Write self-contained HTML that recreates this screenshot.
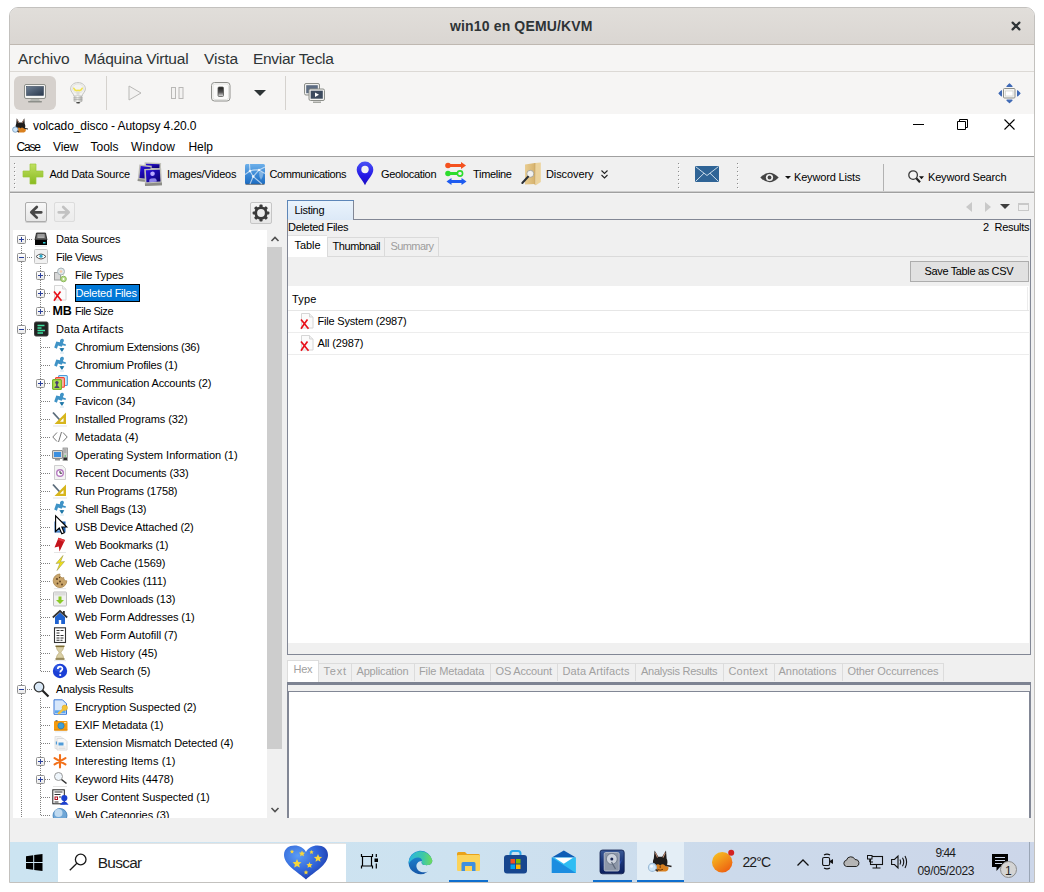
<!DOCTYPE html>
<html lang="es"><head><meta charset="utf-8"><title>win10 en QEMU/KVM</title>
<style>
html,body{margin:0;padding:0;}
body{width:1044px;height:892px;overflow:hidden;background:#fff;position:relative;font-family:"Liberation Sans",sans-serif;}
.a{position:absolute;}
.t{position:absolute;white-space:nowrap;line-height:1;}
svg{position:absolute;overflow:visible;}
/* GTK outer window */
#gwin{left:9px;top:7px;width:1024px;height:874px;border:1px solid #c3c1be;border-radius:9px 9px 0 0;background:#f6f5f4;overflow:hidden;}
#gtitle{left:0;top:0;width:1024px;height:36px;background:linear-gradient(#e1deda,#dad6d2);border-bottom:1px solid #bfb8b1;}
#gtitle .t{font-weight:bold;color:#2e3436;}
#gmenu{left:0;top:37px;width:1024px;height:26px;background:#f6f5f4;border-bottom:1px solid #dcd9d5;}
#gmenu .t{font-size:15.5px;color:#2e3436;top:6px;}
#gtool{left:0;top:64px;width:1024px;height:42px;background:#f6f5f4;}
/* Windows guest */
#vm{left:10px;top:114px;width:1024px;height:768px;background:#f0f0f0;overflow:hidden;}
.seg{font-size:12px;color:#000;}
.tah{font-size:11px;color:#000;}
.grip{width:2px;background:repeating-linear-gradient(#8c8c8c 0 1px,transparent 1px 4px) left top/1px 100% no-repeat,repeating-linear-gradient(transparent 0 1px,#fff 1px 2px,transparent 2px 4px) right top/1px 100% no-repeat;}
.dv{width:1px;background:repeating-linear-gradient(#808080 0 1px,transparent 1px 2px);}
.dh{height:1px;background:repeating-linear-gradient(90deg,#808080 0 1px,transparent 1px 2px);}

</style></head>
<body>
<div id="gwin" class="a">
 <div id="gtitle" class="a"><div class="t" style="left:440px;top:11px;font-size:14px;letter-spacing:0.15px;font-weight:bold;color:#2e3436">win10 en QEMU/KVM</div>
  <svg style="left:1000px;top:12px" width="12" height="12" viewBox="0 0 12 12"><path d="M2.600 2.600 L9.400 9.400 M9.400 2.600 L2.600 9.400" stroke="#2e3436" stroke-width="2.200" stroke-linecap="round" fill="none"/></svg>
 </div>
 <div id="gmenu" class="a">
  <div class="t" style="left:8px">Archivo</div>
  <div class="t" style="left:74px;letter-spacing:-.2px">Máquina Virtual</div>
  <div class="t" style="left:194px">Vista</div>
  <div class="t" style="left:243px;letter-spacing:-.3px">Enviar Tecla</div>
 </div>
 <div id="gtool" class="a">
  <!-- coordinates relative to gtool: page x-10, page y-72 -->
  <div class="a" style="left:4px;top:4px;width:42px;height:34px;border-radius:6px;background:#d6d1cd"></div>
  <!-- monitor -->
  <svg style="left:14px;top:12px" width="22" height="19" viewBox="0 0 22 19">
   <defs><linearGradient id="mon" x1="0" y1="0" x2="1" y2="1"><stop offset="0" stop-color="#6c7d92"/><stop offset="1" stop-color="#2a394d"/></linearGradient></defs>
   <rect x="0.5" y="0.5" width="21" height="14" rx="1.5" fill="#f4f4f2" stroke="#8d8f8a"/>
   <rect x="2.5" y="2.5" width="17" height="9" fill="url(#mon)" stroke="#3b4a5e" stroke-width=".6"/>
   <path d="M7 15 h8 l1 2 h-10z" fill="#b5b7b2"/><rect x="4" y="17" width="14" height="1.4" rx=".7" fill="#8d8f8a"/>
  </svg>
  <!-- bulb -->
  <svg style="left:59.500px;top:9.500px" width="16" height="22" viewBox="0 0 16 22">
   <defs><linearGradient id="bb" x1="0" y1="0" x2="1" y2="0"><stop offset="0" stop-color="#b9b9b6"/><stop offset=".45" stop-color="#f4f4f2"/><stop offset="1" stop-color="#a9a9a6"/></linearGradient></defs>
   <path d="M8 .6 C12.500 .6 15.400 3.400 15.400 6.900 C15.400 10 12.300 11.500 12.100 14 H3.900 C3.700 11.500 .6 10 .6 6.900 C.6 3.400 3.500 .6 8 .6z" fill="#f3f3f1" stroke="#c3c3c0" stroke-width="1"/>
   <ellipse cx="8" cy="6.500" rx="5.600" ry="4.600" fill="none" stroke="#dededb" stroke-width=".8"/>
   <path d="M3.800 6.300 Q5 9.300 8 8.300 Q11 9.300 12.200 6.300" fill="none" stroke="#f1e24e" stroke-width="1.700" stroke-linecap="round"/>
   <path d="M7.200 9.500 V13.800 M8.800 9.500 V13.800" stroke="#cfcfcc" stroke-width=".8"/>
   <rect x="3.600" y="14" width="8.800" height="6" rx="1.200" fill="url(#bb)"/>
   <path d="M3.800 15.800 h8.400 M3.800 17.600 h8.400" stroke="#a4a4a1" stroke-width=".7"/>
   <ellipse cx="8.200" cy="20.800" rx="2.200" ry=".8" fill="#3c3c3a"/>
  </svg>
  <div class="a" style="left:96px;top:4px;width:1px;height:34px;background:#d5d2ce"></div>
  <!-- play -->
  <svg style="left:118px;top:13px" width="14" height="16" viewBox="0 0 14 16"><path d="M1 1 L13 8 L1 15z" fill="#f3f2f1" stroke="#b9b8b6" stroke-width="1"/></svg>
  <!-- pause -->
  <svg style="left:161px;top:15px" width="14" height="12" viewBox="0 0 14 12"><rect x=".5" y=".5" width="4" height="11" fill="#f3f2f1" stroke="#b9b8b6"/><rect x="8" y=".5" width="4" height="11" fill="#f3f2f1" stroke="#b9b8b6"/></svg>
  <!-- shutdown -->
  <svg style="left:201px;top:10px" width="20" height="20" viewBox="0 0 20 20">
   <defs><linearGradient id="sw" x1="0" y1="0" x2="0" y2="1"><stop offset="0" stop-color="#1c1c1c"/><stop offset=".55" stop-color="#555"/><stop offset="1" stop-color="#e8e8e8"/></linearGradient></defs>
   <rect x=".5" y=".5" width="18.500" height="18.500" rx="3" fill="#fbfbfa" stroke="#8f908c"/>
   <rect x="2" y="2" width="15.500" height="15.500" rx="2" fill="none" stroke="#e3e3e0"/>
   <rect x="7" y="5" width="5.500" height="9.500" rx="1" fill="url(#sw)" stroke="#555753" stroke-width=".8"/>
  </svg>
  <svg style="left:244px;top:18px" width="12" height="6" viewBox="0 0 12 6"><path d="M0 0 h12 l-6 6z" fill="#2e3436"/></svg>
  <div class="a" style="left:275px;top:4px;width:1px;height:34px;background:#d5d2ce"></div>
  <!-- screens -->
  <svg style="left:294px;top:11px" width="21" height="21" viewBox="0 0 21 21">
   <rect x=".5" y=".5" width="15" height="11.500" rx="1.500" fill="#f1f1ef" stroke="#8d8f8a"/>
   <rect x="2.200" y="2.200" width="11.600" height="8" fill="#5d6c82"/>
   <rect x="5" y="6" width="15.500" height="11.500" rx="1.500" fill="#f1f1ef" stroke="#8d8f8a"/>
   <rect x="6.700" y="7.700" width="12.100" height="8" fill="#3c4a5e"/>
   <path d="M11 9.500 l4 2.200 l-4 2.200z" fill="#fff"/>
   <rect x="9" y="18.500" width="8" height="1.500" fill="#a5a7a2"/>
  </svg>
  <!-- fullscreen -->
  <svg style="left:988px;top:11px" width="23" height="21" viewBox="0 0 23 21">
   <g fill="#3f69b5" stroke="#3f69b5" stroke-width="1.200" stroke-linejoin="round"><path d="M11.500 1 L14 3.400 H9z"/><path d="M11.500 19.600 L14 17.200 H9z"/><path d="M1 10.300 L3.400 7.800 V12.800z"/><path d="M22 10.300 L19.600 7.800 V12.800z"/></g>
   <rect x="5.500" y="5.500" width="11.500" height="9.500" rx="1" fill="#f4f4f2" stroke="#8d8f8a"/>
   <rect x="7.500" y="8" width="7.500" height="5" fill="#fff" stroke="#cfd0cc" stroke-width=".7"/>
  </svg>
 </div>
</div>

<div id="vm" class="a">
 <!-- all coords inside vm: page x-10, page y-114 -->
 <div class="a" style="left:0;top:0;width:1024px;height:42px;background:#fff"></div>
 <!-- autopsy dog icon -->
 <svg style="left:1px;top:4px" width="18.700" height="16" viewBox="0 0 28 24">
  <path d="M8.600 .4 L12.300 6.800 H16.200 L20 .4 L20.600 8.500 C21.800 10.500 21.800 14 20.400 16 L14.200 18.500 L8 16 C6.600 14 6.600 10.500 7.800 8.500z" fill="#1f1c1b"/>
  <path d="M9.400 2.600 L11.500 7.600 M19.200 2.600 L17 7.600" stroke="#c9937a" stroke-width="1.100"/>
  <path d="M9.500 15.500 Q11.500 13.200 14.200 14.800 Q17 13.200 19 15.500 L22.400 17 Q23 20.500 19.500 21.600 H10.500 Q8.500 20.500 9 17.500z" fill="#d9801f"/>
  <path d="M12.300 13.300 H16.100 L14.200 15.600z" fill="#1f1c1b"/>
  <path d="M19.500 15.200 L25.500 16.600" stroke="#2a2422" stroke-width="1.500"/>
  <circle cx="6.400" cy="17.400" r="4" fill="#cfe7fa" stroke="#7fa3c6" stroke-width="1.400"/>
  <path d="M9.600 19.600 L12 21" stroke="#3a3431" stroke-width="1.600"/>
 </svg>
 <div class="t" style="left:23px;top:6px;font-size:12px;letter-spacing:-0.09px;">volcado_disco - Autopsy 4.20.0</div>
 <svg style="left:903px;top:10px" width="11" height="1" viewBox="0 0 11 1"><rect width="11" height="1" fill="#000"/></svg>
 <svg style="left:947px;top:5px" width="11" height="11" viewBox="0 0 11 11"><path d="M.5 2.500 h8 v8 h-8z M2.500 2.500 v-2 h8 v8 h-2" fill="none" stroke="#000" stroke-width="1"/></svg>
 <svg style="left:994px;top:5px" width="11" height="11" viewBox="0 0 11 11"><path d="M.5 .5 L10.500 10.500 M10.500 .5 L.5 10.500" stroke="#000" stroke-width="1.100"/></svg>
 <div class="t" style="left:6.5px;top:27px;font-size:12px;letter-spacing:-1.17px;">Case</div>
 <div class="t" style="left:43px;top:27px;font-size:12px;letter-spacing:-0.1px;">View</div>
 <div class="t" style="left:80.5px;top:27px;font-size:12px;">Tools</div>
 <div class="t" style="left:121px;top:27px;font-size:12px;letter-spacing:0.26px;">Window</div>
 <div class="t" style="left:178.5px;top:27px;font-size:12px;letter-spacing:-0.06px;">Help</div>
 <!-- toolbar -->
 <div class="a" style="left:0;top:42px;width:1024px;height:1px;background:#a0a0a0"></div>
 <div class="a" style="left:0;top:43px;width:1024px;height:34px;background:#f0f0f0"></div>
 <div class="a" style="left:0;top:77px;width:1024px;height:1px;background:#cdcdcd"></div>
 <div class="a" style="left:0;top:78px;width:1024px;height:1px;background:#a0a0a0"></div><div class="a" style="left:0;top:79px;width:1024px;height:1px;background:#f5f5f5"></div>
 <div class="a grip" style="left:4px;top:49px;height:26px"></div>
 <div class="a grip" style="left:668px;top:49px;height:26px"></div>
 <div class="a grip" style="left:727px;top:49px;height:26px"></div>
 <div class="a" style="left:873px;top:50px;width:1px;height:27px;background:#b2b2b2"></div>
 <!-- plus -->
 <svg style="left:13px;top:50px" width="20" height="20" viewBox="0 0 20 20">
  <defs><linearGradient id="pl" x1="0" y1="0" x2="0" y2="1"><stop offset="0" stop-color="#c0e060"/><stop offset="1" stop-color="#88ba20"/></linearGradient></defs>
  <path d="M7 0 h6 v7 h7 v6 h-7 v7 h-6 v-7 h-7 v-6 h7z" fill="url(#pl)" stroke="#9cc73a" stroke-width=".7"/>
 </svg>
 <div class="t" style="left:39.5px;top:55px;font-size:11px;letter-spacing:-0.23px;">Add Data Source</div>
 <!-- images/videos -->
 <svg style="left:127px;top:47px" width="26" height="26" viewBox="0 0 26 26">
  <defs><linearGradient id="ph" x1="0" y1="0" x2="1" y2="1"><stop offset="0" stop-color="#2a10e0"/><stop offset="1" stop-color="#0a0068"/></linearGradient></defs>
  <g transform="rotate(2 16 5)"><rect x="7.500" y="1.600" width="16.500" height="7" fill="#c2c2ba"/><rect x="9" y="3" width="13.500" height="4" fill="url(#ph)"/></g>
  <g transform="rotate(6 7 12)"><rect x="1.500" y="4" width="12.500" height="16.500" fill="#bdbdb6"/><rect x="1.500" y="18.500" width="12.500" height="2" fill="#8f8f8a"/><rect x="3" y="5.500" width="10" height="12" fill="url(#ph)"/></g>
  <g transform="rotate(-3 16 16)"><rect x="7.600" y="7.600" width="17" height="17" fill="#bfbfb8"/><rect x="7.600" y="22" width="17" height="2.600" fill="#8c8c87"/><rect x="9.200" y="9" width="14" height="12" fill="url(#ph)"/>
  <circle cx="15.700" cy="12.700" r="2.300" fill="#b9a9ff"/><path d="M12 21 v-1.500 q0 -2 2 -2.200 h3.400 q2 .2 2 2.200 v1.500z" fill="#8f85e8"/></g>
 </svg>
 <div class="t" style="left:157px;top:55px;font-size:11px;letter-spacing:-0.26px;">Images/Videos</div>
 <!-- communications -->
 <svg style="left:234px;top:50px" width="21" height="21" viewBox="0 0 21 21">
  <defs><linearGradient id="cm" x1="0" y1="0" x2="0" y2="1"><stop offset="0" stop-color="#6db0ea"/><stop offset=".5" stop-color="#3d8ad6"/><stop offset="1" stop-color="#1c6cc2"/></linearGradient></defs>
  <rect x="1" y="0" width="20" height="20.300" rx="1.500" fill="url(#cm)"/><rect x="1.500" y="19.800" width="19" height="1" fill="#4a4a4a" opacity=".7"/>
  <path d="M15 8 q2.500 -1.500 4.500 1 q-.5 4 -2.500 7 q-2 -3 -2 -8z" fill="#9cc4ea" opacity=".7"/>
  <path d="M6 7 L5.500 0 M6 7 L1 10.500 M6 7 Q10 5.500 15 6 M15 6 L21 3 M15 6 L21 9.500 M6 7 L9.200 12.500 M15 6 L9.200 12.500 M9.200 12.500 L6 20 M9.200 12.500 L18 20" stroke="#fff" stroke-opacity=".62" stroke-width="1.100" fill="none"/>
  <g fill="#fff" opacity=".8"><circle cx="6" cy="7" r="1.300"/><circle cx="15" cy="6" r="1.300"/><circle cx="9.200" cy="12.500" r="1.300"/></g>
 </svg>
 <div class="t" style="left:259.5px;top:55px;font-size:11px;letter-spacing:-0.38px;">Communications</div>
 <!-- geolocation -->
 <svg style="left:346px;top:47px" width="18" height="25" viewBox="0 0 18 25">
  <defs><linearGradient id="pin" x1="0" y1="0" x2="0" y2="1"><stop offset="0" stop-color="#4a52f5"/><stop offset=".6" stop-color="#2418e6"/><stop offset="1" stop-color="#1a0cc0"/></linearGradient></defs>
  <path d="M9 .5 a8.300 8.300 0 0 1 8.300 8.300 c0 5 -5.500 9.500 -8.300 15.500 c-2.800 -6 -8.300 -10.500 -8.300 -15.500 a8.300 8.300 0 0 1 8.300 -8.300z" fill="url(#pin)"/>
  <circle cx="9" cy="8.500" r="3.700" fill="#f4f4f4"/>
 </svg>
 <div class="t" style="left:371px;top:55px;font-size:11px;letter-spacing:-0.32px;">Geolocation</div>
 <!-- timeline -->
 <svg style="left:435px;top:48px" width="23" height="23" viewBox="0 0 23 23">
  <g stroke-width="3" stroke-linecap="round" fill="none"><path d="M2.500 3.500 H17" stroke="#f4511e"/><path d="M2.500 11.500 H14" stroke="#2ddc2d"/><path d="M5 19.500 H17" stroke="#1e5bf0"/></g>
  <circle cx="3" cy="3.500" r="2.800" fill="#f4511e"/><path d="M16 0 l5 3.500 l-5 3.500z" fill="#f4511e"/>
  <circle cx="3" cy="11.500" r="2.800" fill="#2ddc2d"/><circle cx="15" cy="11.500" r="2.600" fill="#f0f0f0" stroke="#2ddc2d" stroke-width="1.600"/>
  <path d="M6.500 16 l-5 3.500 l5 3.500z" fill="#1e5bf0"/><path d="M16.500 16 l5 3.500 l-5 3.500z" fill="#1e5bf0"/>
 </svg>
 <div class="t" style="left:463px;top:55px;font-size:11px;letter-spacing:-0.31px;">Timeline</div>
 <!-- discovery -->
 <svg style="left:510px;top:47px" width="22" height="25" viewBox="0 0 22 25">
  <defs><linearGradient id="fd" x1="0" y1="0" x2="1" y2="0"><stop offset="0" stop-color="#e9cd92"/><stop offset="1" stop-color="#d6b26c"/></linearGradient></defs>
  <path d="M5 3.500 L15 2 V23 L5 23.500z" fill="url(#fd)"/>
  <path d="M15 2 L20.800 1.500 V21 L15.500 24.500z" fill="#ecd39c"/><path d="M15 2 V24" stroke="#c9a45e" stroke-width=".7"/>
  <circle cx="10.300" cy="12.800" r="3.500" fill="#f1f1ef" stroke="#9b9b95" stroke-width=".8"/>
  <path d="M8 15.800 L2.300 22" stroke="#2b2f36" stroke-width="2" stroke-linecap="round"/>
 </svg>
 <div class="t" style="left:536px;top:55px;font-size:11px;letter-spacing:-0.1px;">Discovery</div>
 <svg style="left:591px;top:56px" width="7" height="9" viewBox="0 0 7 9"><path d="M.5 .5 L3.500 3.500 L6.500 .5 M.5 5 L3.500 8 L6.500 5" stroke="#222" stroke-width="1.100" fill="none"/></svg>
 <!-- mail -->
 <svg style="left:685px;top:52px" width="24" height="16" viewBox="0 0 24 16"><rect width="24" height="16" rx="1" fill="#2f6496"/><path d="M.8 .8 L12 9.500 L23.200 .8 M.8 15.200 L9 7.200 M23.200 15.200 L15 7.200" stroke="#d9e6f2" stroke-width=".9" fill="none"/></svg>
 <!-- eye -->
 <svg style="left:750px;top:58px" width="19" height="11" viewBox="0 0 19 11"><path d="M.3 5.500 Q9.500 -4 18.700 5.500 Q9.500 15 .3 5.500z" fill="#444"/><circle cx="9.500" cy="5.500" r="3.600" fill="#f0f0f0"/><circle cx="9.500" cy="5.500" r="1.900" fill="#444"/></svg>
 <svg style="left:774.500px;top:62px" width="6" height="3" viewBox="0 0 6 3"><path d="M0 0 h6 l-3 3z" fill="#111"/></svg>
 <div class="t" style="left:784px;top:58px;font-size:11px;letter-spacing:-0.17px;">Keyword Lists</div>
 <!-- search -->
 <svg style="left:898px;top:56px" width="17" height="14" viewBox="0 0 17 14"><circle cx="5.100" cy="5.100" r="4.300" fill="#f4f4f4" stroke="#3a3a3a" stroke-width="1.300"/><path d="M8.300 8.300 L12 12.300" stroke="#222" stroke-width="2.200"/><path d="M11 6.200 h5 l-2.500 3z" fill="#111"/></svg>
 <div class="t" style="left:918px;top:58px;font-size:11px;letter-spacing:-0.17px;">Keyword Search</div>
</div>

<!-- left tree panel (page coordinates) -->
<div class="a" style="left:0;top:0;width:0;height:0">
<div class="a" style="left:25px;top:202px;width:20px;height:18px;border:1px solid #acacac;border-radius:2px;background:linear-gradient(#f8f8f8,#e6e6e6);box-shadow:0 1px 0 #cfcfcf"></div>
<svg style="left:29px;top:205px" width="14" height="15" viewBox="0 0 14 15"><path d="M12.300 7.300 H3 M7.800 2 L2.300 7.300 L7.800 12.600" stroke="#484848" stroke-width="2.700" stroke-linecap="round" stroke-linejoin="round" fill="none"/></svg>
<div class="a" style="left:54px;top:202px;width:19px;height:18px;border:1px solid #dcdcdc;border-radius:2px;background:linear-gradient(#f3f3f3,#ececec)"></div>
<svg style="left:57px;top:205px" width="14" height="15" viewBox="0 0 14 15"><path d="M1.700 7.300 H11 M6.200 2 L11.700 7.300 L6.200 12.600" stroke="#c2c2c2" stroke-width="2.700" stroke-linecap="round" stroke-linejoin="round" fill="none"/></svg>
<div class="a" style="left:250px;top:202px;width:20px;height:20px;border:1px solid #c6c6c6;border-radius:2px;background:linear-gradient(#f6f6f6,#e6e6e6)"></div>
<svg style="left:252px;top:204px" width="18" height="18" viewBox="0 0 18 18"><g fill="#3a3a3a"><circle cx="9" cy="9" r="6.600"/><rect x="7.400" y=".6" width="3.200" height="4" rx="1" transform="rotate(0 9 9)"/><rect x="7.400" y=".6" width="3.200" height="4" rx="1" transform="rotate(45 9 9)"/><rect x="7.400" y=".6" width="3.200" height="4" rx="1" transform="rotate(90 9 9)"/><rect x="7.400" y=".6" width="3.200" height="4" rx="1" transform="rotate(135 9 9)"/><rect x="7.400" y=".6" width="3.200" height="4" rx="1" transform="rotate(180 9 9)"/><rect x="7.400" y=".6" width="3.200" height="4" rx="1" transform="rotate(225 9 9)"/><rect x="7.400" y=".6" width="3.200" height="4" rx="1" transform="rotate(270 9 9)"/><rect x="7.400" y=".6" width="3.200" height="4" rx="1" transform="rotate(315 9 9)"/></g><circle cx="9" cy="9" r="3.900" fill="#ebebeb"/></svg>
<div class="a" style="left:13px;top:230px;width:254px;height:588px;background:#fff;overflow:hidden">
<div class="a dv" style="left:8px;top:16px;height:584px"></div>
<div class="a dv" style="left:27px;top:36px;height:45px"></div>
<div class="a dv" style="left:27px;top:108px;height:333px"></div>
<div class="a dv" style="left:27px;top:468px;height:117px"></div>
<div class="a dh" style="left:14px;top:9px;width:5px"></div>
<div class="a" style="left:4px;top:5px;width:7px;height:7px;border:1px solid #919191;border-radius:1.500px;background:linear-gradient(#fff,#e9e9e9)"></div>
<div class="a" style="left:6px;top:9px;width:5px;height:1px;background:#2a3f9a"></div>
<div class="a" style="left:8px;top:7px;width:1px;height:5px;background:#2a3f9a"></div>
<svg style="left:20px;top:1px" width="16" height="16" viewBox="0 0 16 16"><g transform="translate(0,2)"><path d="M3.500 0 h9 l1.500 7 h-12z" fill="#5c5c5c" stroke="#1a1a1a" stroke-width=".8"/><rect x="4.500" y="1.300" width="7" height="3.700" fill="#b8b8b8"/><path d="M5 2.500 h6 M5 3.800 h6" stroke="#8a8a8a" stroke-width=".6"/><rect x="2" y="7" width="12" height="5" fill="#050505"/><rect x="10" y="9" width="2.500" height="1.500" fill="#2fd0d8"/><path d="M2 13.200 h12" stroke="#e3e3e3" stroke-width="1"/></g></svg>
<div class="t" style="left:43px;top:4px;font-size:11px;letter-spacing:-0.2px;color:#000">Data Sources</div>
<div class="a dh" style="left:14px;top:27px;width:5px"></div>
<div class="a" style="left:4px;top:23px;width:7px;height:7px;border:1px solid #919191;border-radius:1.500px;background:linear-gradient(#fff,#e9e9e9)"></div>
<div class="a" style="left:6px;top:27px;width:5px;height:1px;background:#2a3f9a"></div>
<svg style="left:20px;top:19px" width="16" height="16" viewBox="0 0 16 16"><rect x="1.500" y="0.500" width="13" height="14" rx="1" fill="#f1f1f1" stroke="#c4c4c4"/><path d="M3 7.500 Q8 2.500 13 7.500 Q8 12.500 3 7.500z" fill="#fff" stroke="#555" stroke-width="1"/><circle cx="8" cy="7.200" r="1.600" fill="#2aa7c9"/></svg>
<div class="t" style="left:43px;top:22px;font-size:11px;letter-spacing:-0.38px;color:#000">File Views</div>
<div class="a dh" style="left:32px;top:45px;width:5px"></div>
<div class="a" style="left:23px;top:41px;width:7px;height:7px;border:1px solid #919191;border-radius:1.500px;background:linear-gradient(#fff,#e9e9e9)"></div>
<div class="a" style="left:25px;top:45px;width:5px;height:1px;background:#2a3f9a"></div>
<div class="a" style="left:27px;top:43px;width:1px;height:5px;background:#2a3f9a"></div>
<svg style="left:39px;top:37px" width="16" height="16" viewBox="0 0 16 16"><rect x="2.500" y="5.500" width="6" height="7.500" fill="#d8d8d8" stroke="#9a9a9a"/><circle cx="9" cy="4.500" r="3.500" fill="#dfe7ea" stroke="#a9b4b8"/><circle cx="9" cy="4.500" r="1.300" fill="#f7c9a8"/><circle cx="11.500" cy="12" r="2.800" fill="#b9dc8a" stroke="#8ab85a"/><circle cx="11.500" cy="12" r=".9" fill="#fff"/></svg>
<div class="t" style="left:62px;top:40px;font-size:11px;letter-spacing:-0.16px;color:#000">File Types</div>
<div class="a dh" style="left:32px;top:63px;width:5px"></div>
<div class="a" style="left:23px;top:59px;width:7px;height:7px;border:1px solid #919191;border-radius:1.500px;background:linear-gradient(#fff,#e9e9e9)"></div>
<div class="a" style="left:25px;top:63px;width:5px;height:1px;background:#2a3f9a"></div>
<div class="a" style="left:27px;top:61px;width:1px;height:5px;background:#2a3f9a"></div>
<svg style="left:39px;top:55px" width="16" height="16" viewBox="0 0 16 16"><path d="M2.500 .5 h8 l3.500 3.500 v11 h-11.500z" fill="#fbfbfb" stroke="#d6d6d6"/><path d="M10.500 .5 v3.500 h3.500" fill="#eee" stroke="#d6d6d6"/><path d="M2 6.500 L9.500 15.800 M8.500 6.500 Q5 11 2 15.800" stroke="#e8111a" stroke-width="1.700" fill="none"/></svg>
<div class="a" style="left:62px;top:54px;width:63px;height:16px;background:#0078d7;border:1px solid #000"></div>
<div class="t" style="left:62.5px;top:58px;font-size:11px;letter-spacing:-0.23px;color:#fff">Deleted Files</div>
<div class="a dh" style="left:32px;top:81px;width:5px"></div>
<div class="a" style="left:23px;top:77px;width:7px;height:7px;border:1px solid #919191;border-radius:1.500px;background:linear-gradient(#fff,#e9e9e9)"></div>
<div class="a" style="left:25px;top:81px;width:5px;height:1px;background:#2a3f9a"></div>
<div class="a" style="left:27px;top:79px;width:1px;height:5px;background:#2a3f9a"></div>
<div class="t" style="left:39.5px;top:75px;font-size:12.5px;letter-spacing:-0.15px;font-weight:bold;color:#000">MB</div>
<div class="t" style="left:62px;top:76px;font-size:11px;letter-spacing:-0.46px;color:#000">File Size</div>
<div class="a dh" style="left:14px;top:99px;width:5px"></div>
<div class="a" style="left:4px;top:95px;width:7px;height:7px;border:1px solid #919191;border-radius:1.500px;background:linear-gradient(#fff,#e9e9e9)"></div>
<div class="a" style="left:6px;top:99px;width:5px;height:1px;background:#2a3f9a"></div>
<svg style="left:20px;top:91px" width="16" height="16" viewBox="0 0 16 16"><rect x="1.500" y="1" width="13.500" height="14" rx="1.500" fill="#222" stroke="#3a3a3a"/><path d="M4.500 4.500 h7 M4.500 7 h4 M4.500 9.500 h7.500 M4.500 12 h5.500" stroke="#3fe0a0" stroke-width="1.300"/></svg>
<div class="t" style="left:43px;top:94px;font-size:11px;letter-spacing:0.16px;color:#000">Data Artifacts</div>
<div class="a dh" style="left:28px;top:117px;width:9px"></div>
<svg style="left:39px;top:109px" width="16" height="16" viewBox="0 0 16 16"><path d="M4.300 2.600 L8 3.200 C7.600 1 9 -.5 10.500 -.2 C12.300 .2 12.300 2.500 11 3.600 L11.200 4.600 L13.600 5.300 C14.400 5.800 14 7.200 12.600 6.800 L10.600 6.200 L9.600 7.800 L6 6.600 L4.900 9.800 L2.200 8.600z" fill="#3f93c6"/><path d="M7.400 9.300 Q9.900 8.600 12.300 9.300 L10.400 12.400 Q9.900 12.800 9.400 12.400z" fill="#1f78a8"/><path d="M8 14 h4" stroke="#d5e8f3" stroke-width="1.200"/></svg>
<div class="t" style="left:62px;top:112px;font-size:11px;letter-spacing:-0.23px;color:#000">Chromium Extensions (36)</div>
<div class="a dh" style="left:28px;top:135px;width:9px"></div>
<svg style="left:39px;top:127px" width="16" height="16" viewBox="0 0 16 16"><path d="M4.300 2.600 L8 3.200 C7.600 1 9 -.5 10.500 -.2 C12.300 .2 12.300 2.500 11 3.600 L11.200 4.600 L13.600 5.300 C14.400 5.800 14 7.200 12.600 6.800 L10.600 6.200 L9.600 7.800 L6 6.600 L4.900 9.800 L2.200 8.600z" fill="#3f93c6"/><path d="M7.400 9.300 Q9.900 8.600 12.300 9.300 L10.400 12.400 Q9.900 12.800 9.400 12.400z" fill="#1f78a8"/><path d="M8 14 h4" stroke="#d5e8f3" stroke-width="1.200"/></svg>
<div class="t" style="left:62px;top:130px;font-size:11px;letter-spacing:-0.22px;color:#000">Chromium Profiles (1)</div>
<div class="a dh" style="left:32px;top:153px;width:5px"></div>
<div class="a" style="left:23px;top:149px;width:7px;height:7px;border:1px solid #919191;border-radius:1.500px;background:linear-gradient(#fff,#e9e9e9)"></div>
<div class="a" style="left:25px;top:153px;width:5px;height:1px;background:#2a3f9a"></div>
<div class="a" style="left:27px;top:151px;width:1px;height:5px;background:#2a3f9a"></div>
<svg style="left:39px;top:145px" width="16" height="16" viewBox="0 0 16 16"><rect x="6.600" y=".5" width="8.700" height="10" rx="1" fill="#c4ebff" stroke="#4a9ad8" stroke-width="1.100"/><rect x="3.500" y="2.600" width="8.900" height="9.700" rx="1" fill="#f9b3a3" stroke="#f0452f" stroke-width="1.100"/><rect x=".6" y="4.600" width="8.800" height="9.800" rx="1" fill="#aee050" stroke="#7ab02c" stroke-width="1.200"/><circle cx="4.900" cy="7.600" r="1.700" fill="#4a4070"/><rect x="4.100" y="8.500" width="1.600" height="3" fill="#4a4070"/><path d="M2.300 13 q0 -2 2.600 -2 q2.600 0 2.600 2z" fill="#4a4070"/></svg>
<div class="t" style="left:62px;top:148px;font-size:11px;letter-spacing:-0.17px;color:#000">Communication Accounts (2)</div>
<div class="a dh" style="left:28px;top:171px;width:9px"></div>
<svg style="left:39px;top:163px" width="16" height="16" viewBox="0 0 16 16"><path d="M4.300 2.600 L8 3.200 C7.600 1 9 -.5 10.500 -.2 C12.300 .2 12.300 2.500 11 3.600 L11.200 4.600 L13.600 5.300 C14.400 5.800 14 7.200 12.600 6.800 L10.600 6.200 L9.600 7.800 L6 6.600 L4.900 9.800 L2.200 8.600z" fill="#3f93c6"/><path d="M7.400 9.300 Q9.900 8.600 12.300 9.300 L10.400 12.400 Q9.900 12.800 9.400 12.400z" fill="#1f78a8"/><path d="M8 14 h4" stroke="#d5e8f3" stroke-width="1.200"/></svg>
<div class="t" style="left:62px;top:166px;font-size:11px;letter-spacing:-0.06px;color:#000">Favicon (34)</div>
<div class="a dh" style="left:28px;top:189px;width:9px"></div>
<svg style="left:39px;top:181px" width="16" height="16" viewBox="0 0 16 16"><path d="M1 1.500 L11 12.500" stroke="#5a6b7a" stroke-width="1.800"/><path d="M14 1.500 V13 H2.500z" fill="#d7b51c"/><path d="M11.500 7 V10.800 H8z" fill="#fff"/><path d="M1 15 h14" stroke="#e3e3e3" stroke-width="1"/></svg>
<div class="t" style="left:62px;top:184px;font-size:11px;letter-spacing:-0.08px;color:#000">Installed Programs (32)</div>
<div class="a dh" style="left:28px;top:207px;width:9px"></div>
<svg style="left:39px;top:199px" width="16" height="16" viewBox="0 0 16 16"><path d="M5 3.500 L.8 8 L5 12.500 M11 3.500 L15.200 8 L11 12.500 M9.500 3 L6.500 13" stroke="#707070" stroke-width=".95" fill="none"/></svg>
<div class="t" style="left:62px;top:202px;font-size:11px;letter-spacing:0.1px;color:#000">Metadata (4)</div>
<div class="a dh" style="left:28px;top:225px;width:9px"></div>
<svg style="left:39px;top:217px" width="16" height="16" viewBox="0 0 16 16"><rect x=".5" y="3.500" width="10" height="8" rx=".5" fill="#d5d5d5" stroke="#8e8e8e"/><rect x="2" y="5" width="7" height="5" fill="#3b8fe0"/><rect x="3" y="12" width="5" height="1.500" fill="#9a9a9a"/><rect x="11" y="1" width="4.500" height="12.500" fill="#c9c9c9" stroke="#8e8e8e" stroke-width=".8"/><path d="M12 3 h2.500 M12 5 h2.500" stroke="#888" stroke-width=".8"/><rect x="11.500" y="10.500" width="3.500" height="2.500" fill="#2b2b2b"/><circle cx="13.200" cy="9" r=".7" fill="#2ecc40"/></svg>
<div class="t" style="left:62px;top:220px;font-size:11px;color:#000">Operating System Information (1)</div>
<div class="a dh" style="left:28px;top:243px;width:9px"></div>
<svg style="left:39px;top:235px" width="16" height="16" viewBox="0 0 16 16"><path d="M2.500 .5 h8 l3 3 v11 h-11z" fill="#f4f4f4" stroke="#cfcfcf"/><circle cx="8" cy="8" r="3.300" fill="#fff" stroke="#b57ac0" stroke-width="1.400"/><path d="M8 6 V8.200 H10" stroke="#333" stroke-width="1" fill="none"/></svg>
<div class="t" style="left:62px;top:238px;font-size:11px;letter-spacing:-0.13px;color:#000">Recent Documents (33)</div>
<div class="a dh" style="left:28px;top:261px;width:9px"></div>
<svg style="left:39px;top:253px" width="16" height="16" viewBox="0 0 16 16"><path d="M1 1.500 L11 12.500" stroke="#5a6b7a" stroke-width="1.800"/><path d="M14 1.500 V13 H2.500z" fill="#d7b51c"/><path d="M11.500 7 V10.800 H8z" fill="#fff"/><path d="M1 15 h14" stroke="#e3e3e3" stroke-width="1"/></svg>
<div class="t" style="left:62px;top:256px;font-size:11px;letter-spacing:-0.18px;color:#000">Run Programs (1758)</div>
<div class="a dh" style="left:28px;top:279px;width:9px"></div>
<svg style="left:39px;top:271px" width="16" height="16" viewBox="0 0 16 16"><path d="M4.300 2.600 L8 3.200 C7.600 1 9 -.5 10.500 -.2 C12.300 .2 12.300 2.500 11 3.600 L11.200 4.600 L13.600 5.300 C14.400 5.800 14 7.200 12.600 6.800 L10.600 6.200 L9.600 7.800 L6 6.600 L4.900 9.800 L2.200 8.600z" fill="#3f93c6"/><path d="M7.400 9.300 Q9.900 8.600 12.300 9.300 L10.400 12.400 Q9.900 12.800 9.400 12.400z" fill="#1f78a8"/><path d="M8 14 h4" stroke="#d5e8f3" stroke-width="1.200"/></svg>
<div class="t" style="left:62px;top:274px;font-size:11px;letter-spacing:-0.27px;color:#000">Shell Bags (13)</div>
<div class="a dh" style="left:28px;top:297px;width:9px"></div>
<svg style="left:39px;top:289px" width="16" height="16" viewBox="0 0 16 16"><rect x="2.500" y="2.500" width="11" height="11" fill="#1f5fae"/><rect x="4" y="11" width="8" height="1.500" fill="#7fb0e6"/></svg>
<div class="t" style="left:62px;top:292px;font-size:11px;letter-spacing:-0.14px;color:#000">USB Device Attached (2)</div>
<div class="a dh" style="left:28px;top:315px;width:9px"></div>
<svg style="left:39px;top:307px" width="16" height="16" viewBox="0 0 16 16"><path d="M6.500 .8 L13 3 L7.500 14.500 L6.800 9.500 L2.500 10.500z" fill="#c4141c"/><path d="M6.500 .8 L13 3 L12 5 L5.800 2.800z" fill="#e03a40"/><path d="M2 15.500 h12" stroke="#e6e6e6"/></svg>
<div class="t" style="left:62px;top:310px;font-size:11px;letter-spacing:-0.22px;color:#000">Web Bookmarks (1)</div>
<div class="a dh" style="left:28px;top:333px;width:9px"></div>
<svg style="left:39px;top:325px" width="16" height="16" viewBox="0 0 16 16"><path d="M11 .5 L4 8.500 L8 8 L5 15.500 L12.500 6.500 L8.500 7z" fill="#f2e21a" stroke="#8d8a3a" stroke-width=".5"/></svg>
<div class="t" style="left:62px;top:328px;font-size:11px;letter-spacing:-0.11px;color:#000">Web Cache (1569)</div>
<div class="a dh" style="left:28px;top:351px;width:9px"></div>
<svg style="left:39px;top:343px" width="16" height="16" viewBox="0 0 16 16"><path d="M8 1 a6.800 6.800 0 1 0 6.800 6.800 a2.600 2.600 0 0 1 -3 -3.200 a2.800 2.800 0 0 1 -3.800 -3.600z" fill="#c8a46a" stroke="#a9864e" stroke-width=".8"/><g fill="#5a3d1e"><circle cx="5" cy="6" r=".9"/><circle cx="8" cy="8.500" r=".9"/><circle cx="5.500" cy="10.500" r=".9"/><circle cx="10" cy="11.500" r=".9"/><circle cx="7.500" cy="4.500" r=".7"/></g><path d="M2 15.700 h12" stroke="#e6e6e6"/></svg>
<div class="t" style="left:62px;top:346px;font-size:11px;letter-spacing:-0.05px;color:#000">Web Cookies (111)</div>
<div class="a dh" style="left:28px;top:369px;width:9px"></div>
<svg style="left:39px;top:361px" width="16" height="16" viewBox="0 0 16 16"><rect x="1.500" y="1" width="13" height="14" rx=".8" fill="#f0f0f0" stroke="#bdbdbd"/><rect x="2.500" y="2" width="11" height="2.500" fill="#dcdcdc"/><path d="M6.500 5.500 h3 v3.500 h2.500 l-4 4 l-4 -4 h2.500z" fill="#8ac926"/></svg>
<div class="t" style="left:62px;top:364px;font-size:11px;letter-spacing:-0.12px;color:#000">Web Downloads (13)</div>
<div class="a dh" style="left:28px;top:387px;width:9px"></div>
<svg style="left:39px;top:379px" width="16" height="16" viewBox="0 0 16 16"><path d="M3 8 v7 h3.800 v-4 h2.400 v4 h3.800 v-7 l-5 -4.500z" fill="#1f62d0"/><path d="M.8 8.500 L8 2 L15.200 8.500" stroke="#333" stroke-width="1.700" fill="none"/><rect x="11" y="2" width="1.800" height="3.500" fill="#333"/></svg>
<div class="t" style="left:62px;top:382px;font-size:11px;letter-spacing:-0.12px;color:#000">Web Form Addresses (1)</div>
<div class="a dh" style="left:28px;top:405px;width:9px"></div>
<svg style="left:39px;top:397px" width="16" height="16" viewBox="0 0 16 16"><rect x="2.500" y=".8" width="11" height="14.700" fill="#fff" stroke="#333" stroke-width="1.100"/><path d="M4.500 3.500 h7 M4.500 6 h4 M4.500 8.500 h7 M4.500 11 h7 M4.500 13.300 h6" stroke="#333" stroke-width="1.100" stroke-dasharray="3 1"/></svg>
<div class="t" style="left:62px;top:400px;font-size:11px;letter-spacing:-0.03px;color:#000">Web Form Autofill (7)</div>
<div class="a dh" style="left:28px;top:423px;width:9px"></div>
<svg style="left:39px;top:415px" width="16" height="16" viewBox="0 0 16 16"><path d="M4.500 2 h7 c0 3.500 -2.500 4 -2.500 5.500 c0 1.500 2.500 2 2.500 5.500 h-7 c0 -3.500 2.500 -4 2.500 -5.500 c0 -1.500 -2.500 -2 -2.500 -5.500z" fill="#d9cfa6" stroke="#b7a871" stroke-width=".7"/><path d="M3.500 1.200 h9 M3.500 14 h9" stroke="#7d6c34" stroke-width="1.500"/><path d="M2 15.700 h12" stroke="#e6e6e6"/></svg>
<div class="t" style="left:62px;top:418px;font-size:11px;letter-spacing:0.01px;color:#000">Web History (45)</div>
<div class="a dh" style="left:28px;top:441px;width:9px"></div>
<svg style="left:39px;top:433px" width="16" height="16" viewBox="0 0 16 16"><circle cx="8" cy="8" r="7.200" fill="#1b3fd6"/><circle cx="6" cy="5" r="3.500" fill="#3b66ea" opacity=".6"/><path d="M5.800 6 c0 -3 4.600 -3 4.600 -.3 c0 1.800 -2.200 1.800 -2.200 3.800" stroke="#fff" stroke-width="1.700" fill="none"/><circle cx="8.200" cy="12" r="1.100" fill="#fff"/></svg>
<div class="t" style="left:62px;top:436px;font-size:11px;letter-spacing:-0.1px;color:#000">Web Search (5)</div>
<div class="a dh" style="left:14px;top:459px;width:5px"></div>
<div class="a" style="left:4px;top:455px;width:7px;height:7px;border:1px solid #919191;border-radius:1.500px;background:linear-gradient(#fff,#e9e9e9)"></div>
<div class="a" style="left:6px;top:459px;width:5px;height:1px;background:#2a3f9a"></div>
<svg style="left:20px;top:451px" width="16" height="16" viewBox="0 0 16 16"><circle cx="6" cy="6" r="4.800" fill="#d9e8f7" stroke="#333" stroke-width="1.300"/><path d="M9.500 9.500 L15.500 15.500" stroke="#222" stroke-width="2.200"/></svg>
<div class="t" style="left:43px;top:454px;font-size:11px;letter-spacing:-0.21px;color:#000">Analysis Results</div>
<div class="a dh" style="left:28px;top:477px;width:9px"></div>
<svg style="left:39px;top:469px" width="16" height="16" viewBox="0 0 16 16"><path d="M2 .8 h8.500 l4 4 v10.500 h-12.500z" fill="#d6e6fa" stroke="#3b78d8" stroke-width="1"/><rect x="3" y="11.300" width="10.500" height="2.700" fill="#5aa7f0"/><circle cx="12.800" cy="8.800" r="2.700" fill="#f2c23a" stroke="#d9a11a" stroke-width=".5"/><path d="M11 10.500 L6.800 14.300" stroke="#f2c23a" stroke-width="2.300" stroke-linecap="round"/></svg>
<div class="t" style="left:62px;top:472px;font-size:11px;letter-spacing:-0.09px;color:#000">Encryption Suspected (2)</div>
<div class="a dh" style="left:28px;top:495px;width:9px"></div>
<svg style="left:39px;top:487px" width="16" height="16" viewBox="0 0 16 16"><rect x="2" y="4" width="13.500" height="9.500" rx="1" fill="#f59a0c"/><rect x="2" y="12.500" width="13.500" height="1" fill="#e08300"/><rect x="3.500" y="3.300" width="2" height="1" fill="#444"/><circle cx="9" cy="8.800" r="3.100" fill="#3f9fd6" stroke="#2b7fb5" stroke-width=".8"/><rect x="12" y="5" width="2.300" height="1.200" fill="#ffe6a8"/><path d="M3 14.800 h12" stroke="#e4ebf3" stroke-width="1"/></svg>
<div class="t" style="left:62px;top:490px;font-size:11px;letter-spacing:-0.09px;color:#000">EXIF Metadata (1)</div>
<div class="a dh" style="left:28px;top:513px;width:9px"></div>
<svg style="left:39px;top:505px" width="16" height="16" viewBox="0 0 16 16"><path d="M3 1.500 h6 l3 3 v9 h-9z" fill="#f3f3f3" stroke="#e2e2e2"/><path d="M5 3.500 h7 l3 3 v8.500 h-10z" fill="#f6f6f6" stroke="#dcdcdc"/><rect x="6.500" y="7.500" width="5" height="3" fill="#4f9bd8"/><rect x="3.800" y="6.500" width="1.200" height="3" fill="#4f9bd8"/><path d="M6.500 12 h7 M6.500 13.500 h7" stroke="#dadada" stroke-width=".8"/></svg>
<div class="t" style="left:62px;top:508px;font-size:11px;letter-spacing:-0.12px;color:#000">Extension Mismatch Detected (4)</div>
<div class="a dh" style="left:32px;top:531px;width:5px"></div>
<div class="a" style="left:23px;top:527px;width:7px;height:7px;border:1px solid #919191;border-radius:1.500px;background:linear-gradient(#fff,#e9e9e9)"></div>
<div class="a" style="left:25px;top:531px;width:5px;height:1px;background:#2a3f9a"></div>
<div class="a" style="left:27px;top:529px;width:1px;height:5px;background:#2a3f9a"></div>
<svg style="left:39px;top:523px" width="16" height="16" viewBox="0 0 16 16"><path d="M8 2 V14.500 M2.600 5.100 L13.400 11.400 M13.400 5.100 L2.600 11.400" stroke="#f2701a" stroke-width="2.100" stroke-linecap="round"/></svg>
<div class="t" style="left:62px;top:526px;font-size:11px;letter-spacing:0.13px;color:#000">Interesting Items (1)</div>
<div class="a dh" style="left:32px;top:549px;width:5px"></div>
<div class="a" style="left:23px;top:545px;width:7px;height:7px;border:1px solid #919191;border-radius:1.500px;background:linear-gradient(#fff,#e9e9e9)"></div>
<div class="a" style="left:25px;top:549px;width:5px;height:1px;background:#2a3f9a"></div>
<div class="a" style="left:27px;top:547px;width:1px;height:5px;background:#2a3f9a"></div>
<svg style="left:39px;top:541px" width="16" height="16" viewBox="0 0 16 16"><circle cx="6.500" cy="5.500" r="4" fill="#eef5fb" stroke="#9a9a9a" stroke-width="1"/><path d="M9.500 8.500 L14.500 12.500" stroke="#333" stroke-width="1.600"/><path d="M1 15.500 h14" stroke="#e3e3e3"/></svg>
<div class="t" style="left:62px;top:544px;font-size:11px;letter-spacing:-0.06px;color:#000">Keyword Hits (4478)</div>
<div class="a dh" style="left:28px;top:567px;width:9px"></div>
<svg style="left:39px;top:559px" width="16" height="16" viewBox="0 0 16 16"><rect x=".8" y=".8" width="11.500" height="14" fill="#fff" stroke="#222" stroke-width="1"/><path d="M2.500 3 h8 M2.500 5.500 h6 M7 8 h2 M2.500 13 h4" stroke="#333" stroke-width="1"/><rect x="2.500" y="7.500" width="3.500" height="3.500" fill="#b01020"/><rect x="3.500" y="8.500" width="1.500" height="1.500" fill="#fff"/><circle cx="12.300" cy="9" r="3.100" fill="#1a3fd0"/><path d="M8 15.800 q4.300 -7 8.600 0z" fill="#1a3fd0"/></svg>
<div class="t" style="left:62px;top:562px;font-size:11px;letter-spacing:-0.07px;color:#000">User Content Suspected (1)</div>
<div class="a dh" style="left:28px;top:585px;width:9px"></div>
<svg style="left:39px;top:577px" width="16" height="16" viewBox="0 0 16 16"><circle cx="8" cy="8.500" r="7" fill="#6fa6d6" stroke="#3f7db8" stroke-width=".8"/><circle cx="6.500" cy="6" r="4" fill="#cfe3f4" opacity=".85"/></svg>
<div class="t" style="left:62px;top:580px;font-size:11px;letter-spacing:-0.04px;color:#000">Web Categories (3)</div>
<svg style="left:42px;top:285px" width="13" height="20" viewBox="0 0 13 20"><path d="M.6 .8 V16.500 L4.300 13 L6.800 18.800 L9.300 17.700 L6.800 12 L11.800 12z" fill="#fff" stroke="#000" stroke-width="1.100"/></svg>
</div>
<div class="a" style="left:267px;top:230px;width:17px;height:588px;background:#f0f0f0"></div>
<div class="a" style="left:267px;top:247px;width:15px;height:502px;background:#cdcdcd"></div>
<svg style="left:271px;top:236px" width="8" height="6" viewBox="0 0 8 6"><path d="M.5 5 L4 1.500 L7.500 5" stroke="#505050" stroke-width="1.600" fill="none"/></svg>
<svg style="left:271px;top:807px" width="8" height="6" viewBox="0 0 8 6"><path d="M.5 1 L4 4.500 L7.500 1" stroke="#505050" stroke-width="1.600" fill="none"/></svg>
</div>

<!-- right panels (page coordinates) -->
<div class="a" style="left:0;top:0;width:0;height:0">
 <!-- Listing tab strip -->
 <div class="a" style="left:354px;top:219px;width:677px;height:1px;background:#828795"></div>
 <div class="a" style="left:287px;top:200px;width:65px;height:19px;border:1px solid #5d86b8;border-bottom:none;background:linear-gradient(#eaf3fc,#dce9f7)"></div>
 <div class="a" style="left:353px;top:201px;width:1px;height:19px;background:#828795"></div>
 <div class="t" style="left:294.5px;top:205px;font-size:11px;letter-spacing:-0.3px;color:#000">Listing</div>
 <svg style="left:966px;top:202px" width="6" height="10" viewBox="0 0 6 10"><path d="M6 0 V10 L0 5z" fill="#c9c9c9"/></svg>
 <svg style="left:985px;top:202px" width="6" height="10" viewBox="0 0 6 10"><path d="M0 0 V10 L6 5z" fill="#c9c9c9"/></svg>
 <svg style="left:1000px;top:204px" width="10" height="5" viewBox="0 0 10 5"><path d="M0 0 H10 L5 5z" fill="#3e3e3e"/></svg>
 <div class="a" style="left:1018px;top:203px;width:9px;height:5px;border:1px solid #c9c9c9;border-top-width:2px"></div>
 <!-- upper panel frame -->
 <div class="a" style="left:287px;top:219px;width:1px;height:435px;background:#828795"></div>
 <div class="a" style="left:1030px;top:219px;width:1px;height:436px;background:#828795"></div>
 <div class="a" style="left:287px;top:654px;width:744px;height:1px;background:#828795"></div>
 <div class="t" style="left:288px;top:222px;font-size:11px;letter-spacing:-0.31px;color:#000">Deleted Files</div>
 <div class="t" style="left:983px;top:222px;font-size:11px;color:#000">2</div><div class="t" style="left:994.5px;top:222px;font-size:11px;letter-spacing:-0.28px;color:#000">Results</div>
 <!-- inner tabs -->
 <div class="a" style="left:288px;top:256px;width:740px;height:1px;background:#dadada"></div>
 <div class="a" style="left:288px;top:235px;width:39px;height:21px;background:#fff;border-top:1px solid #e0e0e0"></div>
 <div class="a" style="left:327px;top:237px;width:58px;height:19px;border:1px solid #dadada;border-bottom:none;box-sizing:border-box"></div>
 <div class="a" style="left:385px;top:237px;width:54px;height:19px;border:1px solid #dadada;border-left:none;border-bottom:none;box-sizing:border-box"></div>
 <div class="t" style="left:294.5px;top:240px;font-size:11px;letter-spacing:-0.07px;color:#000">Table</div>
 <div class="t" style="left:332.5px;top:241px;font-size:11px;letter-spacing:-0.42px;color:#000">Thumbnail</div>
 <div class="t" style="left:390.5px;top:241px;font-size:11px;letter-spacing:-0.59px;color:#9d9d9d">Summary</div>
 <!-- save button -->
 <div class="a" style="left:910px;top:261px;width:117px;height:19px;border:1px solid #adadad;background:#e1e1e1"></div>
 <div class="t" style="left:924.5px;top:266px;font-size:11px;letter-spacing:-0.35px;color:#000">Save Table as CSV</div>
 <!-- table -->
 <div class="a" style="left:288px;top:286px;width:741px;height:357px;background:#fff"></div>
 <div class="a" style="left:288px;top:310px;width:741px;height:1px;background:#e6e6e6"></div>
 <div class="a" style="left:1027px;top:287px;width:1px;height:23px;background:#ececec"></div>
 <div class="a" style="left:288px;top:332px;width:741px;height:1px;background:#ededed"></div>
 <div class="a" style="left:288px;top:354px;width:741px;height:1px;background:#ededed"></div>
 <div class="t" style="left:292px;top:294px;font-size:11px;letter-spacing:0.21px;color:#000">Type</div>
 <svg style="left:299px;top:313px" width="16" height="16" viewBox="0 0 16 16"><path d="M2.500 .5 h8 l3.500 3.500 v11 h-11.500z" fill="#fbfbfb" stroke="#d6d6d6"/><path d="M10.500 .5 v3.500 h3.500" fill="#eee" stroke="#d6d6d6"/><path d="M2 6.500 L9.500 15.800 M8.500 6.500 Q5 11 2 15.800" stroke="#e8111a" stroke-width="1.700" fill="none"/></svg>
 <svg style="left:299px;top:335px" width="16" height="16" viewBox="0 0 16 16"><path d="M2.500 .5 h8 l3.500 3.500 v11 h-11.500z" fill="#fbfbfb" stroke="#d6d6d6"/><path d="M10.500 .5 v3.500 h3.500" fill="#eee" stroke="#d6d6d6"/><path d="M2 6.500 L9.500 15.800 M8.500 6.500 Q5 11 2 15.800" stroke="#e8111a" stroke-width="1.700" fill="none"/></svg>
 <div class="t" style="left:317.5px;top:316px;font-size:11px;letter-spacing:-0.19px;color:#000">File System (2987)</div>
 <div class="t" style="left:317.5px;top:338px;font-size:11px;letter-spacing:-0.12px;color:#000">All (2987)</div>
 <!-- lower tabs -->
 <div class="a" style="left:287px;top:660px;width:32px;height:22px;background:#fff;border:1px solid #dcdcdc;border-bottom:none;box-sizing:border-box"></div>
 <div class="t" style="left:293.5px;top:664px;font-size:11px;letter-spacing:-0.28px;color:#a0a0a0">Hex</div>
 <div class="a" style="left:319px;top:663px;width:624px;height:1px;background:#dcdcdc"></div>
 <div class="a" style="left:351px;top:663px;width:1px;height:18px;background:#dcdcdc"></div>
 <div class="t" style="left:323.5px;top:666px;font-size:11px;letter-spacing:0.77px;color:#a0a0a0">Text</div>
 <div class="a" style="left:414px;top:663px;width:1px;height:18px;background:#dcdcdc"></div>
 <div class="t" style="left:356.5px;top:666px;font-size:11px;letter-spacing:-0.18px;color:#a0a0a0">Application</div>
 <div class="a" style="left:490px;top:663px;width:1px;height:18px;background:#dcdcdc"></div>
 <div class="t" style="left:419px;top:666px;font-size:11px;letter-spacing:-0.1px;color:#a0a0a0">File Metadata</div>
 <div class="a" style="left:557px;top:663px;width:1px;height:18px;background:#dcdcdc"></div>
 <div class="t" style="left:495.5px;top:666px;font-size:11px;letter-spacing:-0.18px;color:#a0a0a0">OS Account</div>
 <div class="a" style="left:635px;top:663px;width:1px;height:18px;background:#dcdcdc"></div>
 <div class="t" style="left:562.5px;top:666px;font-size:11px;letter-spacing:0.12px;color:#a0a0a0">Data Artifacts</div>
 <div class="a" style="left:723px;top:663px;width:1px;height:18px;background:#dcdcdc"></div>
 <div class="t" style="left:641px;top:666px;font-size:11px;letter-spacing:-0.28px;color:#a0a0a0">Analysis Results</div>
 <div class="a" style="left:774px;top:663px;width:1px;height:18px;background:#dcdcdc"></div>
 <div class="t" style="left:728.5px;top:666px;font-size:11px;letter-spacing:0.18px;color:#a0a0a0">Context</div>
 <div class="a" style="left:842px;top:663px;width:1px;height:18px;background:#dcdcdc"></div>
 <div class="t" style="left:778.5px;top:666px;font-size:11px;letter-spacing:-0.01px;color:#a0a0a0">Annotations</div>
 <div class="a" style="left:943px;top:663px;width:1px;height:18px;background:#dcdcdc"></div>
 <div class="t" style="left:847.5px;top:666px;font-size:11px;letter-spacing:-0.12px;color:#a0a0a0">Other Occurrences</div>
 <!-- lower panel -->
 <div class="a" style="left:287px;top:682px;width:744px;height:3px;background:#7d8392"></div>
 <div class="a" style="left:287px;top:685px;width:1px;height:7px;background:#828795"></div>
 <div class="a" style="left:1030px;top:685px;width:1px;height:7px;background:#828795"></div>
 <div class="a" style="left:287px;top:691px;width:744px;height:127px;background:#fff;border:solid #828795;border-width:1px 2px 0 2px;box-sizing:border-box"></div>
</div>

<!-- taskbar (page coordinates) -->
<div class="a" style="left:10px;top:842px;width:1024px;height:40px;background:linear-gradient(90deg,#cce4f1 0%,#cde2f0 45%,#ccdaeb 70%,#ccd6e9 100%);overflow:hidden">
 <!-- local coords: page x-10, y-842 -->
 <svg style="left:16px;top:12px" width="17" height="17" viewBox="0 0 17 17"><path d="M0 2.300 L7.200 1.200 V8 H0z M8.200 1.050 L16.500 0 V8 H8.200z M0 9 H7.200 V15.800 L0 14.700z M8.200 9 H16.500 V17 L8.200 15.950z" fill="#000"/></svg>
 <div class="a" style="left:48px;top:1px;width:288px;height:39px;background:#fff;border-top:1px solid #e3e3e3;box-sizing:border-box"></div>
 <svg style="left:59px;top:11px" width="18" height="18" viewBox="0 0 18 18"><circle cx="11.700" cy="6.500" r="5.300" fill="none" stroke="#1a1a1a" stroke-width="1.300"/><path d="M7.900 10.300 L.8 17.300" stroke="#1a1a1a" stroke-width="1.300"/></svg>
 <div class="t" style="left:87.8px;top:13px;font-size:15.4px;letter-spacing:-0.7px;color:#1c1c1c">Buscar</div>
 <!-- heart -->
 <svg style="left:274px;top:3px" width="44" height="35" viewBox="0 0 44 35">
  <defs><radialGradient id="hg" cx=".32" cy=".3" r=".85"><stop offset="0" stop-color="#5b9df5"/><stop offset=".55" stop-color="#2f63d8"/><stop offset="1" stop-color="#1a2f9c"/></radialGradient></defs>
  <path d="M22 34.500 C14 27 0 20 0 10 C0 3.500 5 .5 10.500 .5 C15.500 .5 20 3 22 7 C24 3 28.500 .5 33.500 .5 C39 .5 44 3.500 44 10 C44 20 30 27 22 34.500z" fill="url(#hg)"/>
  <g fill="#f7d63a"><path id="st" d="M13 14 l1.300 3 l3.200 .3 l-2.400 2.100 l.7 3.200 l-2.800 -1.700 l-2.800 1.700 l.7 -3.200 l-2.400 -2.100 l3.200 -.3z"/>
  <path d="M34 9 l1.200 2.700 l2.900 .3 l-2.200 1.900 l.6 2.900 l-2.500 -1.500 l-2.500 1.500 l.6 -2.900 l-2.200 -1.900 l2.900 -.3z"/>
  <path d="M18 5.500 l.9 2 l2.200 .2 l-1.600 1.500 l.5 2.100 l-2 -1.100 l-2 1.100 l.5 -2.100 l-1.600 -1.500 l2.200 -.2z"/>
  <path d="M25.500 17 l.9 2 l2.200 .2 l-1.600 1.500 l.5 2.100 l-2 -1.100 l-2 1.100 l.5 -2.100 l-1.600 -1.500 l2.200 -.2z"/>
  <path d="M27.500 5 l.6 1.300 l1.500 .2 l-1.100 1 l.3 1.500 l-1.300 -.8 l-1.300 .8 l.3 -1.500 l-1.100 -1 l1.500 -.2z"/>
  <path d="M8 4.500 l.6 1.300 l1.500 .2 l-1.100 1 l.3 1.500 l-1.300 -.8 l-1.300 .8 l.3 -1.500 l-1.100 -1 l1.500 -.2z"/>
  <path d="M22 25 l.7 1.500 l1.700 .2 l-1.300 1.100 l.4 1.700 l-1.500 -.9 l-1.500 .9 l.4 -1.700 l-1.300 -1.100 l1.700 -.2z"/></g>
 </svg>
 <!-- task view -->
 <svg style="left:351px;top:12px" width="18" height="15" viewBox="0 0 18 15"><path d="M.5 0 V2.500 H11.500 V0 M1.500 2.500 V12 M10.500 2.500 V12 M.5 14.500 V12 H11.500 V14.500" stroke="#000" stroke-width="1.200" fill="none"/><rect x="13.500" y="4.500" width="3.500" height="3.500" fill="#000"/><path d="M15.300 0 V3 M15.300 9.500 V14.500" stroke="#000" stroke-width="1.200"/></svg>
 <!-- edge -->
 <svg style="left:398px;top:8px" width="25" height="25" viewBox="0 0 25 25">
  <defs><linearGradient id="e1" x1="0" y1="0" x2="1" y2="0"><stop offset="0" stop-color="#2bb5e0"/><stop offset=".6" stop-color="#3cc7a8"/><stop offset="1" stop-color="#6fdc5a"/></linearGradient><linearGradient id="e2" x1="0" y1="0" x2="0" y2="1"><stop offset="0" stop-color="#1f8fd8"/><stop offset="1" stop-color="#1557a8"/></linearGradient></defs>
  <path d="M.5 12.500 A12 12 0 0 1 24.300 10.500 C24.300 15 20 15.500 16.500 15 C13.500 14.500 13 12.500 14 11 C10 11 8 14 8.500 17 C9.500 22 15 23.500 20 21.500 A12 12 0 0 1 .5 12.500z" fill="url(#e2)"/>
  <path d="M.8 11 A12 12 0 0 1 24.300 10.500 C24.300 15 20 15.500 16.500 15 C14.500 14.700 13.500 13.500 14 11.500 C14.500 8 10 6.500 6 8.500 C3.500 9.800 1.500 12 .8 14z" fill="url(#e1)"/>
 </svg>
 <!-- folder -->
 <svg style="left:447px;top:10px" width="23" height="19" viewBox="0 0 23 19">
  <path d="M0 1.500 Q0 0 1.500 0 H8 L10 2 H21.500 Q23 2 23 3.500 V5 H0z" fill="#e9a21a"/>
  <rect x="0" y="3" width="23" height="16" rx="1.300" fill="#fbd35a"/>
  <path d="M4.500 19 V11.500 Q4.500 10 6 10 H17 Q18.500 10 18.500 11.500 V19 H15 V14 H8 V19z" fill="#3f8fe0"/>
 </svg>
 <div class="a" style="left:439px;top:38px;width:39px;height:2px;background:#0f6fce"></div>
 <!-- store -->
 <svg style="left:494px;top:8px" width="23" height="24" viewBox="0 0 23 24">
  <path d="M6.500 6 V3.500 Q6.500 1 9 1 H14 Q16.500 1 16.500 3.500 V6" stroke="#2ba7ee" stroke-width="2" fill="none"/>
  <rect x="0" y="5" width="23" height="18.500" rx="3" fill="#17468e"/>
  <rect x="6.500" y="9" width="4.500" height="4.500" fill="#f25022"/><rect x="12" y="9" width="4.500" height="4.500" fill="#7fba00"/><rect x="6.500" y="14.500" width="4.500" height="4.500" fill="#00a4ef"/><rect x="12" y="14.500" width="4.500" height="4.500" fill="#ffb900"/>
 </svg>
 <!-- mail -->
 <svg style="left:541px;top:8px" width="26" height="24" viewBox="0 0 26 24">
  <path d="M.8 7.500 L12.800 .4 L24.900 7.500z" fill="#0f5db6"/>
  <rect x=".8" y="7.500" width="24.100" height="15.500" fill="#2fbdf3"/>
  <path d="M.8 7.500 L24.900 23 H.8z" fill="#1c8de0"/>
  <path d="M3.600 7.800 H22 L12.800 13.800z" fill="#fff"/>
 </svg>
 <!-- disk app -->
 <svg style="left:590px;top:8px" width="25" height="25" viewBox="0 0 25 25">
  <defs><linearGradient id="dk" x1="0" y1="0" x2="0" y2="1"><stop offset="0" stop-color="#3b5a96"/><stop offset=".5" stop-color="#1a3578"/><stop offset="1" stop-color="#0b1f5e"/></linearGradient></defs>
  <rect x="0" y="0" width="24.200" height="23.800" rx="2.500" fill="url(#dk)" stroke="#0c1a4a" stroke-width=".8"/>
  <path d="M3 15 Q12 22 22 9 Q20 20 8 20z" fill="#2a4fb0" opacity=".8"/>
  <rect x="4.200" y="2.500" width="15" height="18.500" rx="1.500" fill="#8d97a8" stroke="#c2c8d2" stroke-width=".8"/>
  <circle cx="11.800" cy="8.900" r="5.400" fill="#ccd2dc" stroke="#5f6a7c" stroke-width=".7"/><circle cx="11.800" cy="8.900" r="1.500" fill="#1d2a55"/>
  <path d="M15.500 19 L11.500 12" stroke="#5f6a7c" stroke-width="1.300"/>
 </svg>
 <div class="a" style="left:583px;top:38px;width:39px;height:2px;background:#0f6fce"></div>
 <!-- autopsy active -->
 <div class="a" style="left:627px;top:0;width:47px;height:40px;background:#e4eef6"></div>
 <div class="a" style="left:627px;top:38px;width:47px;height:2px;background:#0f6fce"></div>
 <svg style="left:636px;top:8px" width="28" height="24" viewBox="0 0 28 24">
  <path d="M8.600 .4 L12.300 6.800 H16.200 L20 .4 L20.600 8.500 C21.800 10.500 21.800 14 20.400 16 L14.200 18.500 L8 16 C6.600 14 6.600 10.500 7.800 8.500z" fill="#1f1c1b"/>
  <path d="M9.400 2.600 L11.500 7.600 M19.200 2.600 L17 7.600" stroke="#c9937a" stroke-width="1.100"/>
  <path d="M9.500 15.500 Q11.500 13.200 14.200 14.800 Q17 13.200 19 15.500 L22.400 17 Q23 20.500 19.500 21.600 H10.500 Q8.500 20.500 9 17.500z" fill="#d9801f"/>
  <path d="M12.300 13.300 H16.100 L14.200 15.600z" fill="#1f1c1b"/><path d="M11.500 19.300 Q14.200 21 17 19.300 M14.200 15.600 V18" stroke="#6a3508" stroke-width=".9" fill="none"/>
  <path d="M19.500 15.200 L25.500 16.600" stroke="#2a2422" stroke-width="1.500"/>
  <circle cx="6.400" cy="17.400" r="4" fill="#cfe7fa" stroke="#9dbbd6" stroke-width="1.100"/><circle cx="5.500" cy="16.300" r="1.500" fill="#fff" opacity=".8"/>
  <path d="M9.600 19.600 L12 21" stroke="#3a3431" stroke-width="1.600"/>
 </svg>
 <!-- weather -->
 <svg style="left:702px;top:7px" width="24" height="24" viewBox="0 0 24 24">
  <defs><linearGradient id="sun" x1=".2" y1=".1" x2=".8" y2=".95"><stop offset="0" stop-color="#f6b820"/><stop offset="1" stop-color="#ee5f10"/></linearGradient></defs>
  <circle cx="10.200" cy="13.200" r="10.200" fill="url(#sun)"/><circle cx="19.200" cy="3.800" r="3" fill="#d32222"/>
 </svg>
 <div class="t" style="left:732.5px;top:13px;font-size:14px;letter-spacing:-0.93px;color:#1c1c1c">22°C</div>
 <svg style="left:787px;top:17px" width="12" height="7" viewBox="0 0 12 7"><path d="M.5 6.500 L6 1 L11.500 6.500" stroke="#111" stroke-width="1.300" fill="none"/></svg>
 <!-- meet now -->
 <svg style="left:812px;top:11px" width="12" height="17" viewBox="0 0 12 17"><path d="M2 2 Q5 .2 8 2 M2 15 Q5 16.800 8 15" stroke="#111" stroke-width="1.100" fill="none"/><rect x=".6" y="4.500" width="7" height="8" rx="1.500" fill="none" stroke="#111" stroke-width="1.100"/><path d="M7.600 8 L11 6 V11 L7.600 9z" fill="#111"/></svg>
 <!-- cloud -->
 <svg style="left:833px;top:14px" width="17" height="11" viewBox="0 0 17 11"><path d="M3.500 10.500 A3.200 3.200 0 0 1 3.500 4.200 A4.500 4.500 0 0 1 12 3.500 A3.600 3.600 0 0 1 13.500 10.500z" fill="#b5b5b5" stroke="#222" stroke-width="1"/></svg>
 <!-- network -->
 <svg style="left:857px;top:13px" width="16" height="14" viewBox="0 0 16 14"><rect x="3.500" y="1.500" width="12" height="8" fill="none" stroke="#111" stroke-width="1.100"/><path d="M9.500 9.500 V12.500 M5.500 13 H13.500" stroke="#111" stroke-width="1.100"/><rect x=".5" y=".5" width="4.500" height="3.500" fill="#ccd8ea" stroke="#111" stroke-width="1"/><path d="M2.700 4 V7 H6" stroke="#111" stroke-width="1" fill="none"/></svg>
 <!-- volume -->
 <svg style="left:881px;top:13px" width="17" height="14" viewBox="0 0 17 14"><path d="M.6 4.500 H3.500 L7 1 V13 L3.500 9.500 H.6z" fill="none" stroke="#111" stroke-width="1.100"/><path d="M9 4.500 Q10.500 7 9 9.500 M11.500 2.800 Q14 7 11.500 11.200 M14 1 Q17.200 7 14 13" stroke="#111" stroke-width="1.100" fill="none"/></svg>
 <div class="t" style="left:925.5px;top:5px;font-size:12px;letter-spacing:-0.95px;color:#1c1c1c">9:44</div>
 <div class="t" style="left:907.5px;top:23px;font-size:12px;letter-spacing:-0.34px;color:#1c1c1c">09/05/2023</div>
 <!-- notifications -->
 <svg style="left:982px;top:12px" width="26" height="26" viewBox="0 0 26 26"><path d="M0 0 H16 V13 H8 L4.500 17 V13 H0z" fill="#000"/><path d="M3 3.500 H13 M3 6.500 H13 M3 9.500 H10" stroke="#ccd6e9" stroke-width="1.200"/><circle cx="16.500" cy="15.500" r="8" fill="#d4d4d4" stroke="#8c8c8c" stroke-width="1"/></svg>
 <div class="t" style="left:995px;top:23px;font-size:12px;color:#222">1</div>
 <div class="a" style="left:1019px;top:0;width:1px;height:40px;background:#9aa5b5"></div>
</div>

</body></html>
